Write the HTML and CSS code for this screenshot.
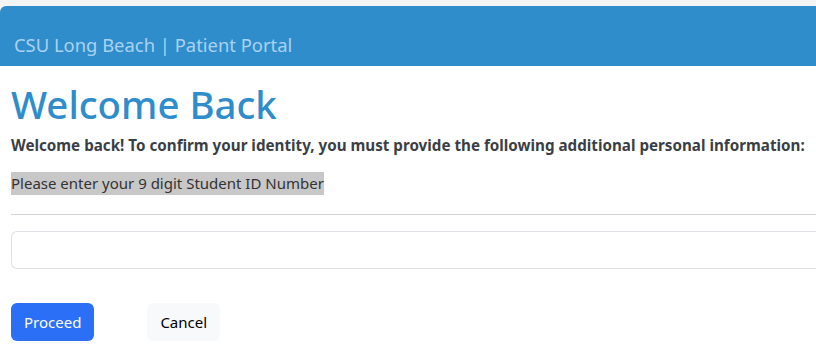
FILE: index.html
```html
<!doctype html>
<html lang="en">
  <head>
    <meta charset="UTF-8" />
    <meta name="viewport" content="width=device-width, initial-scale=1.0" />
    <title>Patient Portal</title>
    <link rel="stylesheet" href="styles.css">
  </head>
  <body>
    <div class="portal">
      <div class="portal-header">CSU Long Beach | Patient Portal</div>
      <div class="portal-body">
        <h1>Welcome Back</h1>
        <p class="intro">Welcome back! To confirm your identity, you must provide the following additional personal information:</p>
        <div class="question"><span class="question-label">Please enter your 9 digit Student ID Number</span></div>
        <hr />
        <input type="text" id="student-id" name="student-id" />
        <div class="actions">
          <button type="submit" class="btn btn-primary">Proceed</button>
          <button type="button" class="btn btn-light">Cancel</button>
        </div>
      </div>
    </div>
  </body>
</html>
```

FILE: styles.css
```css
body {
  font-family: "Noto Sans", "Open Sans", sans-serif;
  margin: 0;
  padding-top: 6px;
  background-color: #f4f4f4;
  color: #212529;
}
.portal {
  background: #fff;
  border-top-left-radius: 6px;
  overflow: hidden;
  min-height: 350px;
}
.portal-header {
  background: #308dcb;
  color: #a9d2f0;
  font-size: 18.4px;
  height: 60px;
  box-sizing: border-box;
  padding: 26px 14px 0;
}
.portal-body {
  padding: 12px 0 0 11px;
}
h1 {
  margin: 0;
  font-size: 38.4px;
  font-weight: 500;
  color: #308dcb;
  line-height: 52px;
}
.intro {
  margin: 5px 0 0;
  font-size: 15.2px;
  font-weight: bold;
  color: #3b3f45;
  white-space: nowrap;
}
.question {
  margin-top: 17px;
  font-size: 15px;
  line-height: 23px;
}
.question-label {
  display: inline-block;
  background: #c8c8c8;
  color: #333;
}
hr {
  margin: 19px 0 16px;
  border: 0;
  border-top: 1px solid #d4d4d4;
}
input {
  display: block;
  width: 100%;
  height: 38px;
  box-sizing: border-box;
  border: 1px solid #dee2e6;
  border-radius: 6px;
  border-right: none;
  border-top-right-radius: 0;
  border-bottom-right-radius: 0;
}
.actions {
  display: flex;
  gap: 53px;
  margin-top: 34px;
}
.btn {
  height: 38px;
  padding: 0 13px;
  font-family: inherit;
  font-size: 15px;
  border: none;
  border-radius: 6px;
  cursor: pointer;
}
.btn-primary {
  background: #2b6ff6;
  color: #fff;
}
.btn-light {
  background: #f8f9fa;
  color: #000;
}
```
